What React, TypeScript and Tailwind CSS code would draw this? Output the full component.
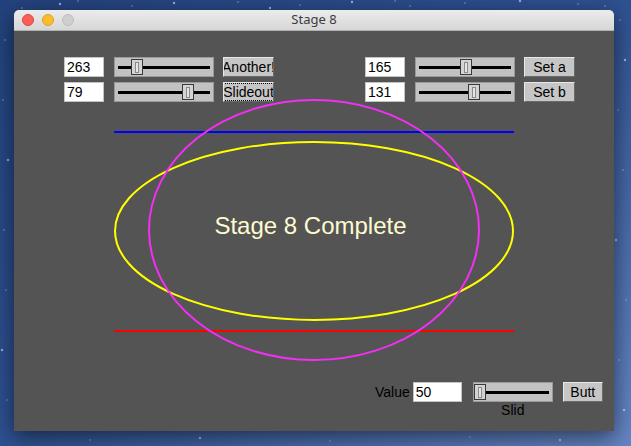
import React from "react";

const font = { fontFamily: '"Liberation Sans", Arial, sans-serif' };

const stars = [
  [60, 4], [78, 1], [132, 6], [174, 3], [238, 2], [300, 5], [352, 2], [410, 6], [465, 3], [520, 1],
  [578, 4], [620, 20], [625, 60], [618, 110], [623, 170], [616, 240], [626, 300], [619, 360], [624, 410],
  [5, 40], [3, 100], [8, 160], [4, 230], [6, 290], [2, 350], [7, 400], [90, 440], [200, 438], [330, 441],
  [470, 437], [560, 440], [605, 6], [22, 8], [270, 8], [395, 1],
];

function Field({ value, w = "w-[40px]" }: { value: string; w?: string }) {
  return (
    <div
      className={`${w} h-[20px] bg-white border border-[#c4c4c4] text-[14px] leading-[18px] pl-[2px] text-black`}
    >
      {value}
    </div>
  );
}

function Slider({ pos, w = "w-[100px]" }: { pos: number; w?: string }) {
  return (
    <div className={`relative ${w} h-[20px] bg-[#c2c2c2] border border-[#9a9a9a]`}>
      <div className="absolute left-[3px] right-[3px] top-[8px] h-[3px] bg-black" />
      <div
        className="absolute top-[1px] w-[12px] h-[16px] bg-[#d4d4d4] border border-[#3a3a3a] flex justify-center items-center"
        style={{ left: pos }}
      >
        <div className="w-[4px] h-[11px] border border-[#8a8a8a] bg-[#e6e6e6]" />
      </div>
    </div>
  );
}

function Button({ label, focus = false, w = "w-[51px]" }: { label: string; focus?: boolean; w?: string }) {
  return (
    <div
      className={`${w} h-[20px] bg-[#c6c6c6] border border-t-[#e8e8e8] border-l-[#e8e8e8] border-b-[#6a6a6a] border-r-[#6a6a6a] flex items-center justify-center text-[14px] text-black overflow-hidden whitespace-nowrap`}
    >
      <span className={focus ? "outline outline-1 outline-dotted outline-black px-[1px] leading-[16px]" : "leading-[16px]"}>
        {label}
      </span>
    </div>
  );
}

export default function App() {
  return (
    <div
      className="relative w-[631px] h-[446px] overflow-hidden bg-gradient-to-br from-[#23427d] via-[#2f5191] to-[#6585c4] pl-[14px] pt-[10px]"
      style={font}
    >
      <svg className="absolute inset-0" width="631" height="446">
        {stars.map(([x, y], i) => (
          <circle key={i} cx={x} cy={y} r={i % 3 === 0 ? 1.2 : 0.7} fill="#ffffff" opacity={0.55} />
        ))}
      </svg>

      <div className="relative w-[600px] rounded-t-[5px] shadow-[0_6px_22px_rgba(0,0,0,0.55)]">
        {/* title bar */}
        <div className="relative h-[21px] rounded-t-[5px] bg-gradient-to-b from-[#ececec] to-[#d6d6d6] border-b border-[#b1b1b1] flex items-center justify-center">
          <div className="absolute left-[8px] top-[4px] flex gap-[8px]">
            <div className="w-[12px] h-[12px] rounded-full bg-[#fc5f57] border border-[#e0443e]" />
            <div className="w-[12px] h-[12px] rounded-full bg-[#fdbc2e] border border-[#dea123]" />
            <div className="w-[12px] h-[12px] rounded-full bg-[#cfcfcf] border border-[#bdbdbd]" />
          </div>
          <span className="text-[13px] text-[#3c3c3c]" style={{ fontFamily: '"Noto Sans", "Liberation Sans", sans-serif' }}>
            Stage 8
          </span>
        </div>

        {/* content */}
        <div className="relative h-[400px] bg-[#545454] pt-[26px] pl-[50px]">
          <svg className="absolute inset-0" width="600" height="400">
            <line x1="100" y1="101" x2="500" y2="101" stroke="#0000ff" strokeWidth="2" />
            <line x1="100" y1="300" x2="500" y2="300" stroke="#ff0000" strokeWidth="2" />
            <ellipse cx="300" cy="200" rx="199" ry="89" fill="none" stroke="#ffff00" strokeWidth="2" />
            <ellipse cx="300" cy="199" rx="165" ry="130" fill="none" stroke="#f52ef5" strokeWidth="2" />
          </svg>

          <div className="relative flex flex-col gap-[5px]">
            <div className="flex">
              <div className="flex items-center gap-[10px]">
                <Field value="263" />
                <Slider pos={16} />
              </div>
              <div className="ml-[9px]">
                <Button label="Another!" />
              </div>
              <div className="ml-[91px] flex items-center gap-[10px]">
                <Field value="165" />
                <Slider pos={44} />
              </div>
              <div className="ml-[9px]">
                <Button label="Set a" />
              </div>
            </div>
            <div className="flex">
              <div className="flex items-center gap-[10px]">
                <Field value="79" />
                <Slider pos={67} />
              </div>
              <div className="ml-[9px]">
                <Button label="Slideout" focus />
              </div>
              <div className="ml-[91px] flex items-center gap-[10px]">
                <Field value="131" />
                <Slider pos={52} />
              </div>
              <div className="ml-[9px]">
                <Button label="Set b" />
              </div>
            </div>
          </div>

          <div className="relative mt-[110px] -ml-[50px] w-[600px] flex justify-center">
            <span className="text-[24px] leading-[28px] text-[#fffbd0] -ml-[7px]">Stage 8 Complete</span>
          </div>

          <div className="absolute left-[361px] top-[351px] flex items-start">
            <span className="text-[14px] leading-[20px] text-black mr-[3px]">Value</span>
            <Field value="50" w="w-[49px]" />
            <div className="ml-[11px] flex flex-col items-center">
              <Slider pos={0} w="w-[80px]" />
              <span className="text-[14px] leading-[16px] text-black">Slid</span>
            </div>
            <div className="ml-[10px]">
              <Button label="Butt" w="w-[40px]" />
            </div>
          </div>
        </div>
      </div>
    </div>
  );
}
